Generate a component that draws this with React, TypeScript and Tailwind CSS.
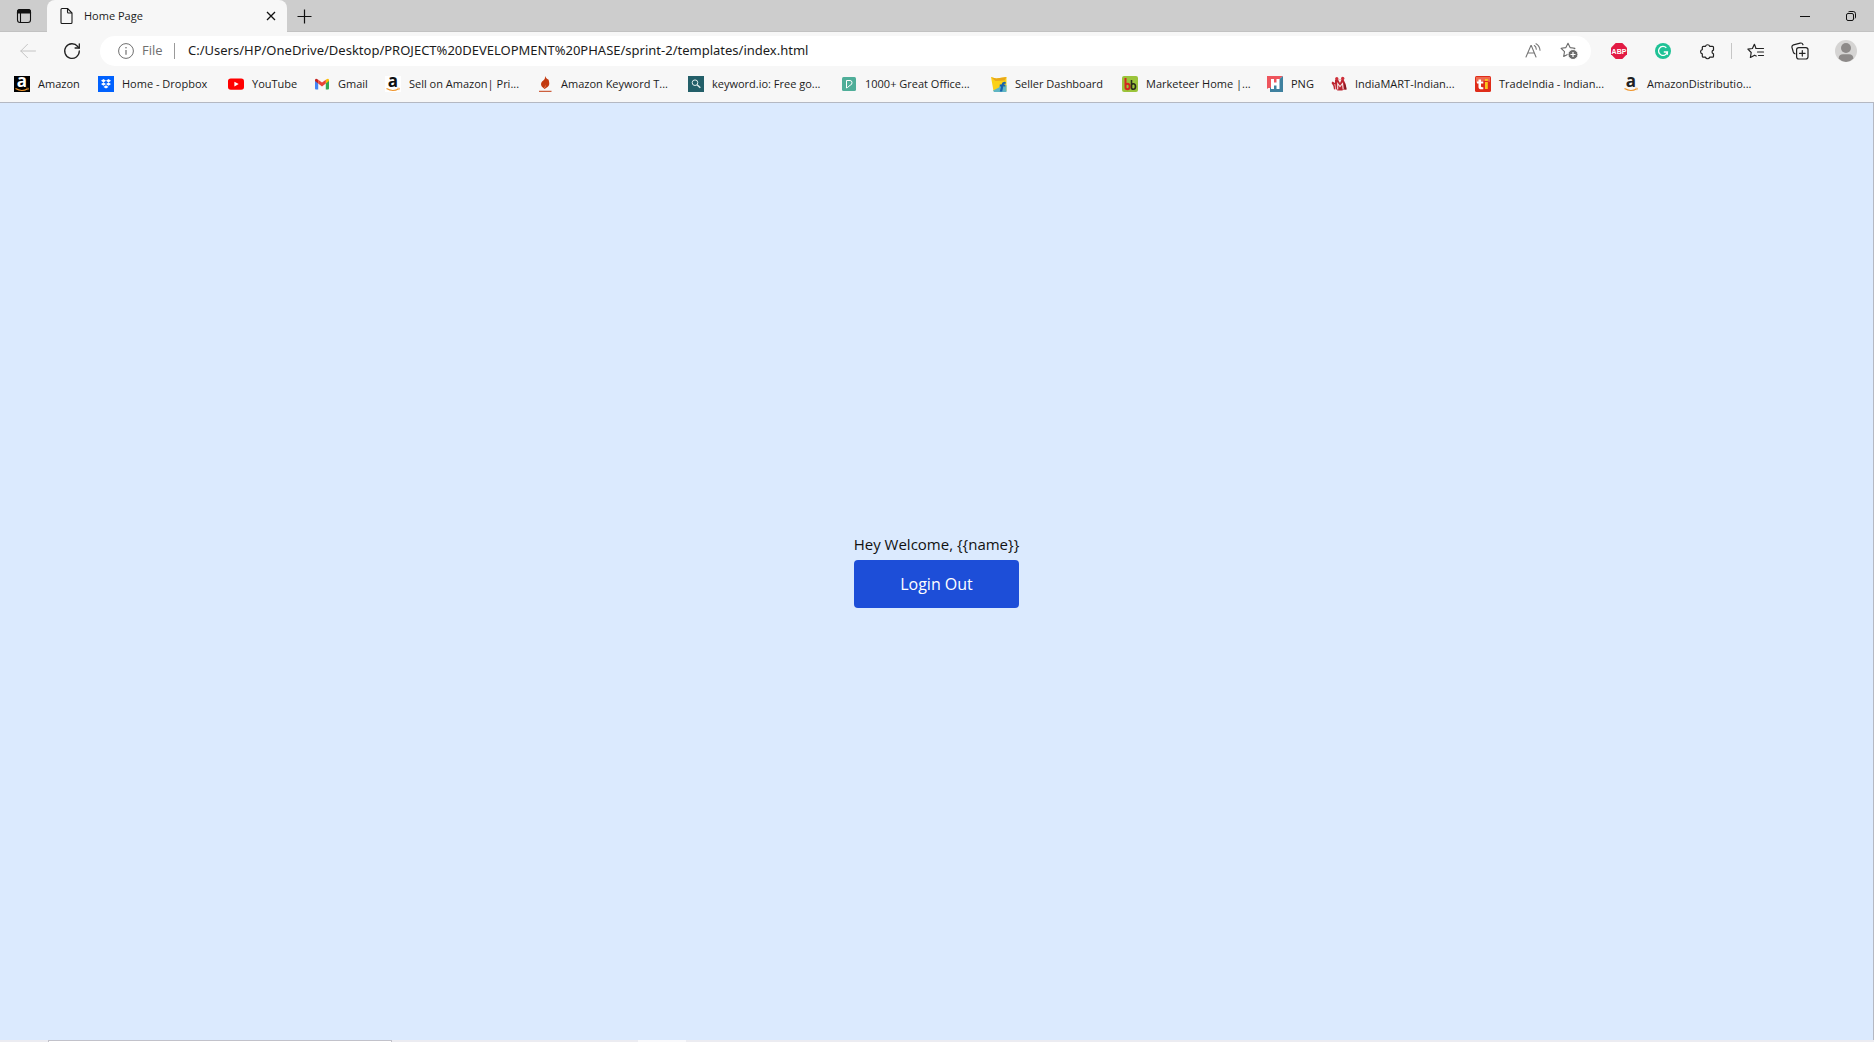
import type { ReactNode } from "react";

const TabActions = () => (
  <svg width="16" height="16" viewBox="0 0 16 16" fill="none" stroke="#111" strokeWidth="1.1">
    <rect x="1.5" y="1.5" width="13" height="13" rx="2.5" />
    <path d="M1.5 5V4A2.5 2.5 0 0 1 4 1.5h8A2.5 2.5 0 0 1 14.500 4v1z" fill="#111" />
    <path d="M4.500 5v9.500" />
  </svg>
);

const PageIcon = () => (
  <svg width="16" height="18" viewBox="0 0 16 18" fill="none" stroke="#1b1b1b" strokeWidth="1.100" strokeLinejoin="round">
    <path d="M4 1.500h5.500L14 6v9.500a1 1 0 0 1-1 1H4a1 1 0 0 1-1-1v-13a1 1 0 0 1 1-1z" />
    <path d="M9.500 1.500V5a1 1 0 0 0 1 1H14" />
  </svg>
);

const CloseIcon = () => (
  <svg width="10" height="10" viewBox="0 0 10 10" stroke="#111" strokeWidth="1.300">
    <path d="M1 1l8 8M9 1L1 9" />
  </svg>
);

const PlusIcon = () => (
  <svg width="15" height="15" viewBox="0 0 15 15" stroke="#111" strokeWidth="1.200">
    <path d="M7.500 .5v14M.5 7.500h14" />
  </svg>
);

const MinimizeIcon = () => (
  <svg width="10" height="10" viewBox="0 0 10 10" stroke="#111">
    <path d="M0 5.500h10" />
  </svg>
);

const RestoreIcon = () => (
  <svg width="10" height="10" viewBox="0 0 10 10" fill="none" stroke="#111">
    <rect x=".5" y="2.500" width="7" height="7" rx="1.500" />
    <path d="M2.500 .8Q3 .5 4 .5h3.200A2.300 2.300 0 0 1 9.500 2.800V6q0 1-.4 1.400" />
  </svg>
);

const BackIcon = () => (
  <svg width="16" height="16" viewBox="0 0 16 16" fill="none" stroke="#c4c4c4" strokeLinecap="round" strokeLinejoin="round">
    <path d="M15.500 8H.8M7.500 1.300L.8 8l6.700 6.700" />
  </svg>
);

const ReloadIcon = () => (
  <svg width="18" height="18" viewBox="0 0 18 18" fill="none" stroke="#222" strokeWidth="1.300" strokeLinecap="round">
    <path d="M16.300 9A7.300 7.300 0 1 1 14.700 4.500L16.200 6" />
    <path d="M16.300 1.800V6h-4.200" strokeLinejoin="round" />
  </svg>
);

const InfoIcon = () => (
  <svg width="16" height="16" viewBox="0 0 16 16" fill="none" stroke="#6f6f6f">
    <circle cx="8" cy="8" r="7.400" />
    <path d="M8 7v4.700" strokeWidth="1.200" />
    <circle cx="8" cy="4.800" r=".8" fill="#6f6f6f" stroke="none" />
  </svg>
);

const ReadAloudIcon = () => (
  <svg width="16" height="16" viewBox="0 0 16 16" fill="none" stroke="#767676" strokeWidth="1.100" strokeLinecap="round">
    <path d="M1 14L5.900 2.500h.4L11 14M2.800 10h6.500" />
    <path d="M9.300 2.600q1.800 1 2 3.600M11 .8q3.600 2 4 6.400" />
  </svg>
);

const starPath = "M8 1.200l2.100 4.400 4.800.7-3.500 3.400.8 4.800L8 12.300l-4.300 2.200.8-4.800L1.100 6.300l4.800-.7z";

const AddFavoriteIcon = () => (
  <svg width="18" height="18" viewBox="0 0 18 18" fill="none">
    <path d={starPath} stroke="#6a6a6a" strokeWidth="1.100" strokeLinejoin="round" />
    <circle cx="13" cy="12.500" r="5" fill="#6a6a6a" stroke="#fff" />
    <path d="M13 10v5M10.500 12.500h5" stroke="#fff" strokeWidth="1.200" />
  </svg>
);

const FavoritesIcon = () => (
  <svg width="18" height="16" viewBox="0 0 18 16" fill="none" stroke="#222" strokeWidth="1.200" strokeLinecap="round" strokeLinejoin="round">
    <path d="M9 5.400L7.400 1.300 5.400 5.500l-4.500.7L4.200 9.500l-.8 5 4.200-2.300 1.600.8" />
    <path d="M9 5.500h7.500M10.500 9h6M11.500 12.500h5" />
  </svg>
);

const CollectionsIcon = () => (
  <svg width="18" height="18" viewBox="0 0 18 18" fill="none" stroke="#222" strokeWidth="1.200" strokeLinecap="round">
    <rect x="5.600" y="5.600" width="11.400" height="11.400" rx="2.200" />
    <path d="M11.300 8.500v5.600M8.500 11.300h5.600" />
    <path d="M4 11.800Q2.800 11.400 2.300 10L1 5.600Q.5 3.500 2.500 2.900l6.700-1.800Q11.300.600 12 2.800" />
  </svg>
);

const PuzzleIcon = () => (
  <svg width="16" height="17" viewBox="0 0 16 17" fill="none" stroke="#222" strokeWidth="1.200" strokeLinejoin="round">
    <path d="M4.300 3.300h2.200a2.200 2.200 0 0 1 4.200 0H13.500a1 1 0 0 1 1 1V7.100a1.900 1.900 0 0 0 0 3.700V13.200a1 1 0 0 1-1 1h-2.800a2.200 2.200 0 0 1-4.200 0H4.300a1 1 0 0 1-1-1V10.900a2.200 2.200 0 0 1 0-4.300V4.300a1 1 0 0 1 1-1z" />
  </svg>
);

const AdblockIcon = () => (
  <svg width="16" height="16" viewBox="0 0 16 16">
    <path d="M4.700 0h6.600L16 4.700v6.600L11.300 16H4.700L0 11.300V4.700z" fill="#e21b44" />
    <text x="8" y="10.600" textAnchor="middle" fontFamily="Liberation Sans" fontWeight="700" fontSize="7" fill="#fff">ABP</text>
  </svg>
);

const GrammarlyIcon = () => (
  <svg width="16" height="16" viewBox="0 0 16 16" fill="none" stroke="#fff" strokeWidth="1.300">
    <circle cx="8" cy="8" r="8" fill="#1fc296" stroke="none" />
    <path d="M11.300 4.800A4.500 4.500 0 1 0 12.400 9H8.800M12.400 8.500v3.200" />
  </svg>
);

const Avatar = () => (
  <svg width="22" height="22" viewBox="0 0 22 22">
    <circle cx="11" cy="11" r="11" fill="#d5d4d3" />
    <circle cx="11" cy="8" r="5" fill="#8d8a89" />
    <path d="M3.600 18.500Q4 14.300 8 14.300h6q4 0 4.400 4.200A11 11 0 0 1 11 22a11 11 0 0 1-7.400-3.500z" fill="#8d8a89" />
  </svg>
);

const AmazonMark = ({ back, ink }: { back: string; ink: string }) => (
  <svg width="16" height="16" viewBox="0 0 16 16" className="overflow-visible">
    <rect width="16" height="16" fill={back} />
    <text x="8" y="11" textAnchor="middle" fontFamily="Open Sans" fontWeight="700" fontSize="17" fill={ink}>a</text>
    <path d="M1.500 12.600q6 3.600 12 .4" fill="none" stroke="#f0952b" strokeWidth="1.200" />
    <path d="M12.300 12.200h2.200l-.6 2" fill="none" stroke="#f0952b" strokeWidth=".7" />
  </svg>
);

const DropboxMark = () => (
  <svg width="16" height="16" viewBox="0 0 16 16">
    <rect width="16" height="16" fill="#0061fe" />
    <path d="M5.500 3L8 4.700 5.500 6.400 3 4.700zM10.500 3L13 4.700l-2.500 1.700L8 4.700zM5.500 6.400L8 8.100 5.500 9.800 3 8.100zM10.500 6.400L13 8.100l-2.500 1.700L8 8.100zM8 9.200l2.500 1.700L8 12.600l-2.500-1.700z" fill="#fff" />
  </svg>
);

const YouTubeMark = () => (
  <svg width="16" height="16" viewBox="0 0 16 16">
    <rect y="2.400" width="16" height="11.400" rx="2.800" fill="#f00" />
    <path d="M6.400 5.700v4.800L10.700 8.100z" fill="#fff" />
  </svg>
);

const GmailMark = () => (
  <svg width="16" height="16" viewBox="0 0 16 16">
    <path d="M1 4v8.500q0 1 1 1h2.200V6.300z" fill="#4285f4" />
    <path d="M15 4v8.500q0 1-1 1h-2.200V6.300z" fill="#34a853" />
    <path d="M11.800 3.700L13 2.900Q15 2 15 4.200v.9l-3.200 2.500z" fill="#fbbc04" />
    <path d="M1 5.100v-.9Q1 2 3 2.900l1.200.8v3.900z" fill="#c5221f" />
    <path d="M4.200 3.700L8 6.600l3.800-2.900v3.900L8 10.500 4.200 7.600z" fill="#ea4335" />
  </svg>
);

const FlameMark = () => (
  <svg width="16" height="16" viewBox="0 0 16 16" fill="#c23a10">
    <path d="M8.300 0q.2 1.800 1.600 2.800Q12.300 3.500 12 5.500q1 3.500-1.500 5.500L7.600 12.900 5.800 11.500Q3.300 9.500 4.300 6.700q.6-1.200 2-2.200Q8.300 2.800 8.300 0z" />
    <path d="M8.600 8.500q.6 1.700-.8 3.500l-.8-.3q1.200-1.400 1.600-3.200z" fill="#e68b62" />
    <path d="M2 14.800h12.500v1H2z" />
  </svg>
);

const SearchMark = () => (
  <svg width="16" height="16" viewBox="0 0 16 16" fill="none" stroke="#e1eeee">
    <rect width="16" height="16" fill="#235f69" stroke="none" />
    <circle cx="7" cy="6.700" r="2.800" />
    <path d="M9 8.800l3.300 3" strokeWidth="1.500" />
  </svg>
);

const OfficeMark = () => (
  <svg width="16" height="16" viewBox="0 0 16 16" fill="none" stroke="#fff">
    <rect x="1" y="1" width="14" height="14" rx="1.500" fill="#4fae99" stroke="none" />
    <path d="M5.500 12V4.500H9q2 0 2 2.200T9 9.300L6.500 11.500z" />
  </svg>
);

const FlipkartMark = () => (
  <svg width="16" height="16" viewBox="0 0 16 16">
    <path d="M0 1l5 1.500L15.500 1v14H2.500z" fill="#fbd116" />
    <path d="M0 1.300l5.400 1.300L15.500 1l-2 3.500-9 .4z" fill="#e9a71a" />
    <path d="M2 14.500l6-3 1-2 3 1.500 3.500-2V16H3z" fill="#5fb5c4" />
    <path d="M14.700 6q-3.700-.7-4.200 2.500H8.800v2h1.300L8.800 15.500h2.400l1.100-5h2v-2h-1.600q.2-1 2-.7z" fill="#1763ae" />
  </svg>
);

const BbMark = () => (
  <svg width="16" height="16" viewBox="0 0 16 16" fill="none" strokeWidth="2">
    <rect width="16" height="16" rx="2" fill="#9bc43b" />
    <path d="M3.500 2v9.500q0 1.800 2 1.800 2.200 0 2.200-2.800T5.500 7.700q-1.500 0-2 1.500" stroke="#d3281e" />
    <path d="M9.500 4v7.500q0 1.800 1.800 1.800 2.200 0 2.200-2.800T11.300 7.700q-1.500 0-1.800 1.500" stroke="#292b1b" strokeWidth="1.600" />
  </svg>
);

const PngMark = () => (
  <svg width="16" height="16" viewBox="0 0 16 16">
    <path d="M0 0h16L0 13z" fill="#ee555d" />
    <path d="M16 0v16H3V11z" fill="#3f819f" />
    <path d="M0 0h13v3L3 12H0z" fill="#ee555d" />
    <path d="M4 3h3v3.500h2.500V3h3v10h-3V9.500H7V13H4z" fill="#fff" />
  </svg>
);

const IndiaMartMark = () => (
  <svg width="16" height="16" viewBox="0 0 16 16">
    <path d="M4 3.500h8.500Q15.500 8 15.500 13.500h-2L11 14.500H6.500L5 13 3 13.500Q2.500 9 .5 7l1-1.500L4 7z" fill="#bd2430" />
    <path d="M13 6.500q2.500 3 2.500 7h-2z" fill="#821923" />
    <path d="M6.700 13.500V7.500L9 10.500l2.500-3 .7 6" fill="none" stroke="#f6e4e4" strokeWidth="1.100" />
    <path d="M3.700 8q.9 2.500.9 5.500" fill="none" stroke="#f6e4e4" strokeWidth=".7" />
    <path d="M7 3.500h3.500L9 7z" fill="#f7f7f7" />
    <circle cx="5.800" cy="2.600" r="1.600" fill="#cf2f39" />
    <circle cx="11.700" cy="2.500" r="1.700" fill="#cf2f39" />
  </svg>
);

const TradeIndiaMark = () => (
  <svg width="16" height="16" viewBox="0 0 16 16">
    <rect width="16" height="16" rx="1.500" fill="#df2c19" />
    <path d="M1 1h14v5Q8 3 1 7z" fill="#ee6a50" />
    <path d="M3.500 3.500H6v2h2.300v2H6v3q0 1 2.300.7v2Q3.500 14 3.500 11V7.500H2v-2h1.500z" fill="#fff" />
    <path d="M10 6h2.800v7H10zM10 3h2.800v2H10z" fill="#f9c51e" />
  </svg>
);

type Bookmark = { label: string; icon: ReactNode; width: string };

const bookmarks: Bookmark[] = [
  { label: "Amazon", icon: <AmazonMark back="#000" ink="#fff" />, width: "w-[84px]" },
  { label: "Home - Dropbox", icon: <DropboxMark />, width: "w-[130px]" },
  { label: "YouTube", icon: <YouTubeMark />, width: "w-[86px]" },
  { label: "Gmail", icon: <GmailMark />, width: "w-[71px]" },
  { label: "Sell on Amazon| Pri...", icon: <AmazonMark back="#fff" ink="#111" />, width: "w-[152px]" },
  { label: "Amazon Keyword T...", icon: <FlameMark />, width: "w-[151px]" },
  { label: "keyword.io: Free go...", icon: <SearchMark />, width: "w-[153px]" },
  { label: "1000+ Great Office...", icon: <OfficeMark />, width: "w-[150px]" },
  { label: "Seller Dashboard", icon: <FlipkartMark />, width: "w-[131px]" },
  { label: "Marketeer Home |...", icon: <BbMark />, width: "w-[145px]" },
  { label: "PNG", icon: <PngMark />, width: "w-[64px]" },
  { label: "IndiaMART-Indian...", icon: <IndiaMartMark />, width: "w-[144px]" },
  { label: "TradeIndia - Indian...", icon: <TradeIndiaMark />, width: "w-[148px]" },
  { label: "AmazonDistributio...", icon: <AmazonMark back="none" ink="#222" />, width: "w-[140px]" },
];

const IconButton = ({ label, size, children }: { label: string; size: string; children: ReactNode }) => (
  <button type="button" aria-label={label} className={`flex h-7 shrink-0 items-center justify-center ${size}`}>
    {children}
  </button>
);

const TabStrip = () => (
  <div className="flex h-8 bg-[#cdcdcd] shadow-[inset_0_-1px_0_#c2c2c2]">
    <div className="flex w-[47px] shrink-0 items-center justify-center">
      <IconButton label="Tab actions menu" size="w-8"><TabActions /></IconButton>
    </div>
    <div className="flex w-60 items-center rounded-t-lg bg-[#f7f7f7] pl-[11px]">
      <PageIcon />
      <span className="ml-2.5 flex-1 text-[11px] text-[#1b1b1b]">Home Page</span>
      <IconButton label="Close tab" size="w-8"><CloseIcon /></IconButton>
    </div>
    <div className="flex flex-1 items-center">
      <IconButton label="New tab" size="w-[35px]"><PlusIcon /></IconButton>
    </div>
    <div className="flex items-center">
      <IconButton label="Minimize" size="w-[46px]"><MinimizeIcon /></IconButton>
      <IconButton label="Restore" size="w-[46px]"><RestoreIcon /></IconButton>
    </div>
  </div>
);

const Toolbar = () => (
  <div className="flex h-[38px] items-center pl-1.5">
    <IconButton label="Back" size="w-11"><BackIcon /></IconButton>
    <IconButton label="Refresh" size="w-11"><ReloadIcon /></IconButton>
    <div className="ml-1.5 flex h-[30px] flex-1 items-center rounded-full bg-white pr-1 pl-[18px]">
      <InfoIcon />
      <span className="ml-2 w-6 text-[13px] text-[#6f6f6f]">File</span>
      <span className="mx-2 h-4 w-px bg-[#9a9a9a]" />
      <input
        aria-label="Address"
        readOnly
        value="C:/Users/HP/OneDrive/Desktop/PROJECT%20DEVELOPMENT%20PHASE/sprint-2/templates/index.html"
        className="ml-[5px] flex-1 font-['Noto_Sans',sans-serif] text-[13px] text-[#1b1b1b] outline-none"
      />
      <IconButton label="Read aloud" size="w-9"><ReadAloudIcon /></IconButton>
      <IconButton label="Add to favorites" size="w-9"><AddFavoriteIcon /></IconButton>
    </div>
    <div className="ml-1.5 flex items-center">
      <IconButton label="Adblock Plus" size="w-11"><AdblockIcon /></IconButton>
      <IconButton label="Grammarly" size="w-11"><GrammarlyIcon /></IconButton>
      <IconButton label="Extensions" size="w-11"><PuzzleIcon /></IconButton>
      <span className="mx-0.5 h-4 w-px bg-[#c6c6c6]" />
      <IconButton label="Favorites" size="w-11"><FavoritesIcon /></IconButton>
      <IconButton label="Collections" size="w-11"><CollectionsIcon /></IconButton>
      <IconButton label="Profile" size="w-12"><Avatar /></IconButton>
      <span className="w-1" />
    </div>
  </div>
);

const BookmarksBar = () => (
  <nav aria-label="Favorites bar" className="flex h-[33px] items-start border-b border-[#b4b8c2] pt-1.5 pl-3.5">
    {bookmarks.map(({ label, icon, width }) => (
      <a key={label} href="#" className={`flex shrink-0 items-center gap-2 text-[11px] leading-4 whitespace-nowrap text-[#1b1b1b] ${width}`}>
        <span className="shrink-0">{icon}</span>
        {label}
      </a>
    ))}
  </nav>
);

export default function App() {
  return (
    <div className="flex min-h-screen flex-col bg-[#f7f7f7] font-['Open_Sans','Noto_Sans',sans-serif]">
      <header>
        <TabStrip />
        <Toolbar />
        <BookmarksBar />
      </header>
      <main className="flex flex-1 items-center justify-center border-r border-[#b4b8c2] bg-blue-100">
        <div className="flex flex-col">
          <p className="text-[15px] leading-6 text-[#111]">Hey Welcome, {"{{name}}"}</p>
          <button type="button" className="my-1 h-12 rounded bg-[#1d4ed8] text-base text-white">Login Out</button>
        </div>
      </main>
      <footer className="flex h-0.5 bg-[#ececf1]">
        <div className="ml-12 w-[344px] border-x border-t border-[#c2c2ca] bg-white" />
        <div className="ml-[246px] w-12 bg-[#f9f9fb]" />
      </footer>
    </div>
  );
}
